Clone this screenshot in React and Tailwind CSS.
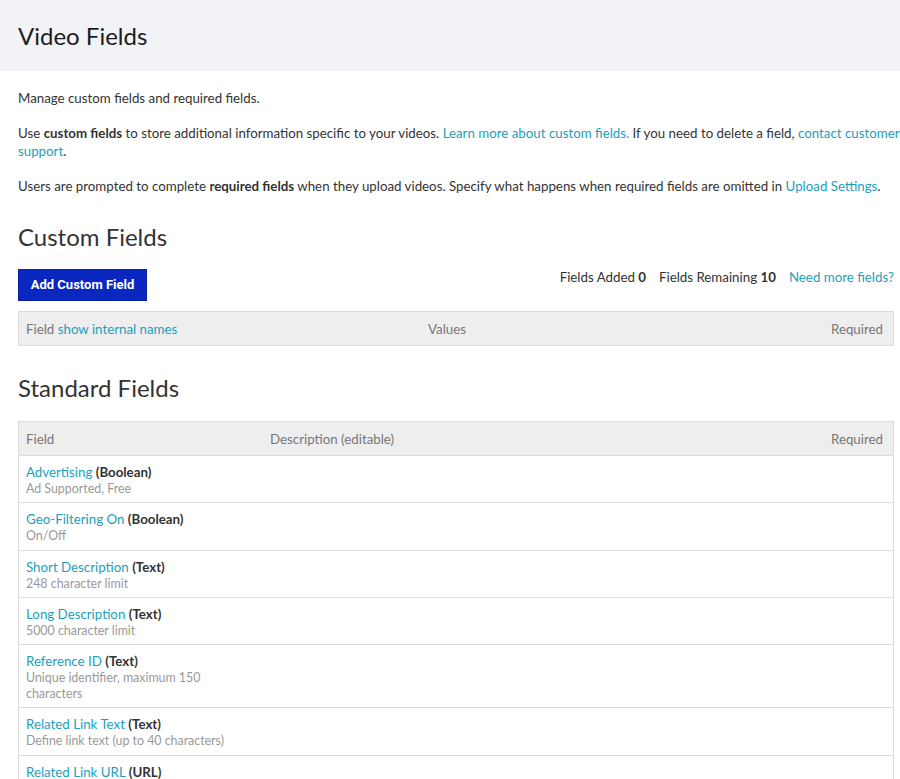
import React from "react"

const standardFields = [
    { name: "Advertising", type: "Boolean", note: "Ad Supported, Free" },
    { name: "Geo-Filtering On", type: "Boolean", note: "On/Off" },
    { name: "Short Description", type: "Text", note: "248 character limit" },
    { name: "Long Description", type: "Text", note: "5000 character limit" },
    { name: "Reference ID", type: "Text", note: "Unique identifier, maximum 150 characters" },
    { name: "Related Link Text", type: "Text", note: "Define link text (up to 40 characters)" },
    { name: "Related Link URL", type: "URL", note: "Define the link URL" },
    { name: "Tags", type: "Text", note: "Comma separated list" },
]

const A = ({ children }) => (
    <a href="#" className="text-[#1ba1bb] hover:underline">{children}</a>
)

const App = () => {
    return (
        <div className="min-h-screen bg-white text-[#333] font-['Lato','Open_Sans',sans-serif] text-[13.3px] leading-[18px]">
            {/* header */}
            <div className="h-[71px] bg-[#f2f3f7] flex items-center px-[18px]">
                <h1 className="text-[24px] text-[#1c1c1c] leading-[30px] mt-[1px]">Video Fields</h1>
            </div>

            <div className="pl-[18px] pr-[6px] pt-[18px] pb-10">
                <div className="-mr-[6px]">
                    <p>Manage custom fields and required fields.</p>
                    <p className="mt-[17px]">
                        Use <b>custom fields</b> to store additional information specific to your videos. <A>Learn more about custom fields.</A> If you need to delete a field, <A>contact customer support</A>.
                    </p>
                    <p className="mt-[17px]">
                        Users are prompted to complete <b>required fields</b> when they upload videos. Specify what happens when required fields are omitted in <A>Upload Settings</A>.
                    </p>
                </div>

                {/* Custom Fields */}
                <h2 className="mt-[27px] text-[24px] leading-[30px] text-[#333]">Custom Fields</h2>
                <div className="mt-[17px] flex items-start justify-between">
                    <button className="h-[32px] px-[11px] w-[129px] bg-[#0a28c0] border border-[#0a22a8] text-white text-[13px] font-bold font-['Roboto',sans-serif]">
                        Add Custom Field
                    </button>
                    <div className="flex items-center gap-[13px] -mt-[1px]">
                        <span>Fields Added <b>0</b></span>
                        <span>Fields Remaining <b>10</b></span>
                        <A>Need more fields?</A>
                    </div>
                </div>
                <div className="mt-[10px] h-[35px] flex items-center bg-[#eeeeee] border border-[#dcdcdc] px-[7px] text-[#777]">
                    <div className="w-[402px]">Field <A>show internal names</A></div>
                    <div className="flex-1">Values</div>
                    <div className="pr-[3px]">Required</div>
                </div>

                {/* Standard Fields */}
                <h2 className="mt-[27px] text-[24px] leading-[30px] text-[#333]">Standard Fields</h2>
                <div className="mt-[18px] border border-[#dcdcdc]">
                    <div className="h-[34px] flex items-center bg-[#eeeeee] border-b border-[#dcdcdc] px-[7px] text-[#777]">
                        <div className="w-[244px]">Field</div>
                        <div className="flex-1">Description (editable)</div>
                        <div className="pr-[3px]">Required</div>
                    </div>
                    {standardFields.map((f) => (
                        <div key={f.name} className="flex border-b border-[#dcdcdc] last:border-b-0 px-[7px] pt-[7px] pb-[5.3px]">
                            <div className="w-[220px] pr-[10px]">
                                <div><A>{f.name}</A> <b className="text-[#333]">({f.type})</b></div>
                                <div className="text-[12.4px] leading-[16px] text-[#999]">{f.note}</div>
                            </div>
                            <div className="flex-1" />
                            <div className="w-[60px]" />
                        </div>
                    ))}
                </div>
            </div>
        </div>
    )
}

export default App
